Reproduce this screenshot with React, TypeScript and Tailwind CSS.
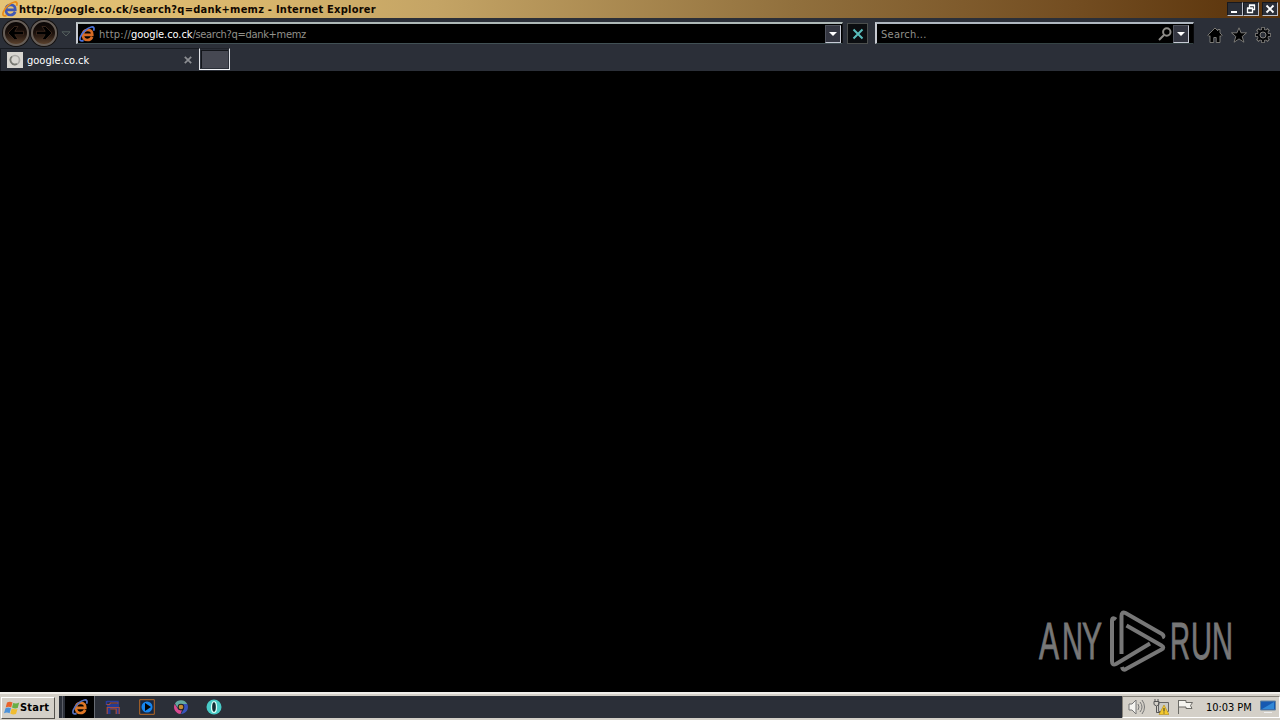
import type { ReactNode } from "react";

const watermarkLetters = [
  { char: "A", x: 4, width: 20 },
  { char: "N", x: 27, width: 21 },
  { char: "Y", x: 47, width: 20 },
  { char: "R", x: 135, width: 20 },
  { char: "U", x: 156, width: 21 },
  { char: "N", x: 177, width: 21 },
];

function IeLogo({ className, ring, letter }: { className: string; ring: string; letter: string }) {
  return (
    <svg viewBox="0 0 16 16" className={className} fill="none">
      <path d="M13.2 10.800C12 13.300 10.500 14 8.500 14 5.500 14 3.800 11.800 3.800 9c0-3 2-5.200 5-5.200 2.900 0 4.700 2 4.500 5H5" stroke={letter} strokeWidth="2.700" />
      <path
        d="M14.600 4.800C15.600 2 14.800.7 12.500 1 8.500 1.600 2.800 6.800 1.300 11c-1.100 3.200.3 4.700 3.300 3.400"
        stroke={ring}
        strokeWidth="1.700"
      />
    </svg>
  );
}

function NavButton({ flip }: { flip?: boolean }) {
  return (
    <div className="flex h-[26px] w-[26px] items-center justify-center rounded-full border-2 border-[#675e57] bg-gradient-to-b from-[#090605] via-[#1c110c] to-[#5a402c] ring-1 ring-[#15110f]">
      <svg viewBox="0 0 18 18" className={flip ? "h-[18px] w-[18px] shrink-0 rotate-180" : "h-[18px] w-[18px] shrink-0"}>
        <path
          d="M1 9 7.500 2.500h3.500L7.800 7.300H16.500v3.400H7.800l3.200 4.800H7.500z"
          fill="#000"
          stroke="#54392a"
          strokeWidth=".6"
        />
      </svg>
    </div>
  );
}

function DropButton() {
  return (
    <div className="flex h-[18px] w-4 shrink-0 items-center justify-center border border-t-[#50535d] border-l-[#50535d] border-r-[#c7cad5] border-b-[#c7cad5] bg-[#343641]">
      <svg viewBox="0 0 8 4" className="h-1 w-2">
        <path d="M0 0h8L4 4z" fill="#fff" />
      </svg>
    </div>
  );
}

function WindowButton({ children }: { children: ReactNode }) {
  return (
    <div className="h-[14px] w-4 border border-t-[#17191f] border-l-[#17191f] border-r-[#bfc1ca] border-b-[#bfc1ca] bg-[#2b2f38]">
      <svg viewBox="0 0 14 12" className="h-3 w-[14px]" fill="none" stroke="#fff">
        {children}
      </svg>
    </div>
  );
}

function TitleBar() {
  return (
    <div className="flex h-[18px] items-center bg-[linear-gradient(90deg,#e5c477_0%,#d8b66c_20%,#c4a465_34%,#91703d_62%,#734d21_84%,#583109_100%)] pl-[2px] pr-[2px]">
      <IeLogo className="h-4 w-4" ring="#e98b18" letter="#4058b4" />
      <span className="ml-px flex-1 whitespace-pre pt-px font-['DejaVu_Sans_Condensed','DejaVu_Sans',sans-serif] text-[11px] leading-[17px] font-bold tracking-[0.245px] text-[#100800]">
        http://google.co.ck/search?q=dank+memz - Internet Explorer
      </span>
      <div className="flex">
        <WindowButton>
          <path d="M3 9h6" strokeWidth="2" />
        </WindowButton>
        <WindowButton>
          <path d="M5.500 5V2.500h5v4H9M5 2h6M3.500 5.500h5v4h-5zM3 5h6" strokeWidth="1.300" />
        </WindowButton>
        <div className="w-[3px]" />
        <WindowButton>
          <path d="m3.500 2.500 7 7m0-7-7 7" strokeWidth="1.900" />
        </WindowButton>
      </div>
    </div>
  );
}

function AddressRow() {
  return (
    <div className="flex h-[30px] items-start pl-[3px] pt-[2px]">
      <div className="flex gap-[2px]">
        <NavButton />
        <NavButton flip />
      </div>
      <svg viewBox="0 0 10 6" className="mt-[11px] ml-1 h-[6px] w-[10px]" fill="none">
        <path d="M1 .8h8L5 5z" stroke="#55605e" />
      </svg>
      <div className="mt-[2px] ml-[5px] flex h-[22px] w-[767px] items-center border-t-2 border-l-2 border-r border-b border-t-[#aeb8b7] border-l-[#c6c9d0] border-r-[#111217] border-b-[#415054] bg-black pr-[1px] pl-[1px]">
        <IeLogo className="h-4 w-4" ring="#4b72da" letter="#d96c25" />
        <span className="ml-1 flex-1 whitespace-nowrap pt-[3px] font-['DejaVu_Sans_Condensed','DejaVu_Sans',sans-serif] text-[11px] text-[#92918b]">
          <span className="tracking-[0.25px]">http://</span>
          <span className="tracking-[-0.08px] text-white">google.co.ck</span>
          <span className="tracking-[-0.3px]">/search?q=dank+memz</span>
        </span>
        <DropButton />
      </div>
      <div className="mt-[3px] ml-[4px] flex h-[21px] w-[21px] items-center justify-center border border-[#4b4e4d] bg-[#0b0d10]">
        <svg viewBox="0 0 12 12" className="h-3 w-3">
          <path d="m1.500 1.500 9 9m0-9-9 9" stroke="#59bdbb" strokeWidth="2" />
        </svg>
      </div>
      <div className="mt-[2px] ml-[7px] flex h-[22px] w-[319px] items-center border-t-2 border-l-2 border-r border-b border-t-[#afb7c0] border-l-[#c6c9d0] border-r-[#08090b] border-b-[#354344] bg-black pr-1 pl-1">
        <span className="flex-1 pt-[3px] font-['DejaVu_Sans_Condensed','DejaVu_Sans',sans-serif] text-[11px] tracking-[0.25px] text-[#92918b]">Search...</span>
        <svg viewBox="0 0 14 14" className="mr-px h-[14px] w-[14px]" fill="none" stroke="#8e8c88" strokeWidth="2">
          <circle cx="8.800" cy="5" r="3.700" />
          <path d="m6 8-5 5" />
        </svg>
        <DropButton />
      </div>
      <div className="mt-[7px] ml-[13px] flex gap-2">
        <svg viewBox="0 0 16 16" className="h-4 w-4">
          <path d="M8 1 .8 8.200l1.300 1.300L3 8.700V15.500h3.800v-5h2.400v5H13V8.700l.9.800 1.300-1.300L13 6V2.500h-2.200v1.300z" fill="#000" stroke="#85837f" strokeWidth=".9" />
        </svg>
        <svg viewBox="0 0 16 16" className="h-4 w-4">
          <path d="m8 .8 2 5h5.500l-4.300 3.700 1.700 5.700L8 11.900l-4.900 3.300 1.700-5.700L.5 5.800H6z" fill="#000" stroke="#85837f" strokeWidth=".9" />
        </svg>
        <svg viewBox="0 0 16 16" className="h-4 w-4" fill="none">
          <path d="M8 0v16M0 8h16M2.300 2.300l11.400 11.400m0-11.400L2.300 13.700" stroke="#85837f" strokeWidth="3.400" />
          <circle cx="8" cy="8" r="5.700" fill="#050608" stroke="#85837f" strokeWidth=".8" />
          <path d="M8 .8v14.400M.8 8h14.400M3 3l10 10m0-10L3 13" stroke="#050608" strokeWidth="1.900" />
          <circle cx="8" cy="8" r="3" fill="#2b2f38" stroke="#85837f" />
        </svg>
      </div>
    </div>
  );
}

function TabRow() {
  return (
    <div className="flex h-[23px] items-stretch">
      <div className="flex w-[199px] items-center border-t border-l border-[#171a20] pl-[6px]">
        <div className="flex h-4 w-4 items-center justify-center bg-[#d8d6d1]">
          <svg viewBox="0 0 12 12" className="h-3 w-3" fill="none">
            <circle cx="6" cy="6" r="4.500" stroke="#aaa9a5" strokeWidth="1.700" />
            <path d="M3 2.500a4.600 4.600 0 0 0 5 7.600" stroke="#777872" strokeWidth="1.600" />
          </svg>
        </div>
        <span className="ml-1 flex-1 pt-[2px] font-['DejaVu_Sans_Condensed','DejaVu_Sans',sans-serif] text-[11px] text-white">google.co.ck</span>
        <svg viewBox="0 0 8 8" className="mr-[7px] h-2 w-2">
          <path d="m.8.8 6.400 6.400m0-6.400L.8 7.200" stroke="#8c8e92" strokeWidth="1.700" />
        </svg>
      </div>
      <div className="h-[22px] w-[31px] border border-t-[#20232a] border-r-[#e1e3e8] border-b-[#f1f2f5] border-l-[#e1e3e8] p-px">
        <div className="h-full border-t border-l border-[#14161b] bg-[#464852]" />
      </div>
    </div>
  );
}

function Watermark() {
  return (
    <svg viewBox="0 0 220 80" className="mr-[25px] mb-[7px] h-20 w-[220px]" fill="none">
      <g fill="#777" stroke="#777" strokeWidth=".9" fontFamily="'Liberation Sans Narrow', 'Liberation Sans', sans-serif" fontSize="52">
        {watermarkLetters.map((letter) => (
          <text key={letter.x} x={letter.x} y="54" textLength={letter.width} lengthAdjust="spacingAndGlyphs">
            {letter.char}
          </text>
        ))}
      </g>
      <path
        d="M81 14.500q-4-3-4 1.500v40q0 5 4 3l34-20.500M86.500 49V11q0-5 4-3l36.500 21q3 2 0 3.500M91.500 20.500l35 20q3.500 2 0 4L91 64q-3 2-4-2"
        stroke="#777"
        strokeWidth="4"
      />
    </svg>
  );
}

function Taskbar() {
  return (
    <div className="flex h-7 border-t-2 border-[#f0eeea] bg-[#d4d0c8] pt-[2px]">
      <div className="mr-1 flex h-[23px] items-center pl-px">
        <div className="flex h-[22px] w-[54px] items-center border border-t-white border-r-[#55524d] border-b-[#55524d] border-l-white bg-[#d4d0c8] pl-[2px]">
          <svg viewBox="0 0 16 16" className="h-4 w-4">
            <path d="M3 2.500q3-1.500 5.500 0L7.200 7.500Q4.500 6 1.700 7.500z" fill="#e9632c" />
            <path d="M9.200 3q3 1 6-.5L13.700 8q-3 1-5.700-.5z" fill="#69ae45" />
            <path d="M1.500 8.200Q4 7 7 8.200l-1.400 5Q3 12 0 13.200z" fill="#4c92da" />
            <path d="M7.700 8.500q3 1.200 5.800.5L12 14q-3 1-5.700-.5z" fill="#f0bd31" />
          </svg>
          <span className="pt-px font-['DejaVu_Sans_Condensed','DejaVu_Sans',sans-serif] text-[11px] font-bold tracking-[0.2px] text-black">Start</span>
        </div>
      </div>
      <div className="flex h-[22px] flex-1 items-center bg-[#2b2f38]">
        <div className="mr-[2px] ml-[3px] h-full w-px bg-[#5b5e66]" />
        <div className="flex h-[22px] w-[30px] items-center justify-center border-r border-[#676b73] bg-black">
          <IeLogo className="h-4 w-4" ring="#5670bd" letter="#de7625" />
        </div>
        <svg viewBox="0 0 16 16" className="ml-[10px] h-4 w-4">
          <path d="M1.500 2v4M2 2.500h11V6" fill="none" stroke="#283c9f" strokeWidth="1.500" />
          <path d="M2 5h12v10h-2.500v-5h-6v5H2z" fill="#253b91" />
          <path d="M1.500 5.500h3l1-1.500h8M2 8.500h12M2.200 8v7m3-5h6v5m3-7v7" fill="none" stroke="#a94c3d" strokeWidth="1.200" />
        </svg>
        <svg viewBox="0 0 16 16" className="ml-[18px] h-4 w-4">
          <path d="M.7.7h14.600v14.600H.7z" fill="#172741" stroke="#b86925" />
          <circle cx="8" cy="8" r="5.500" fill="#1685ef" />
          <path d="m6 4 6 4-6 4z" fill="#030506" />
        </svg>
        <svg viewBox="0 0 16 16" className="ml-[18px] h-4 w-4">
          <path d="M2 4.500a7 7 0 0 1 12.200.5H8a3.400 3.400 0 0 0-3.200 4z" fill="#64aaa3" />
          <path d="M1.700 5 5 10q1.500 2 4 1l-1.500 4A7 7 0 0 1 1.700 5" fill="#d94a91" />
          <path d="M8 5h6.300A7 7 0 0 1 8 15l3-5z" fill="#3855bd" />
          <circle cx="8" cy="8" r="3.300" fill="#20232a" />
          <circle cx="8" cy="8" r="2.300" fill="#c68b32" />
        </svg>
        <svg viewBox="0 0 16 16" className="ml-[17px] h-4 w-4">
          <circle cx="8" cy="8" r="7.500" fill="#48cbc7" />
          <ellipse cx="8" cy="8" rx="2.500" ry="5.400" fill="#142d35" stroke="#d8fff7" strokeWidth="1.300" />
        </svg>
      </div>
      <div className="flex h-[22px] w-[158px] items-center border border-t-[#858179] border-l-[#858179] border-r-white border-b-white pl-[5px]">
        <svg viewBox="0 0 18 16" className="h-4 w-[18px]" fill="none" stroke="#777" strokeWidth="1">
          <path d="M1 5h3l4-4v14l-4-4H1z" fill="#f5f4f0" />
          <path d="M10 5q2 3 0 6M12 3q4 5 0 10M14 1q5 7 0 14" />
        </svg>
        <svg viewBox="0 0 16 16" className="ml-[7px] h-4 w-4" fill="none">
          <path d="M5.500 3.500h10v9h-10z" fill="#c9c9c4" stroke="#666" />
          <path d="M1 2.500h5v3q-2.500 3-5 0zM3.500 7v6.500h4M2 0v3m3-3v3" stroke="#555" />
          <path d="m11 6 5 9.500H6z" fill="#f4c92d" stroke="#b28a12" strokeWidth=".6" />
          <path d="M11 9v3.500m0 1v1" stroke="#333" />
        </svg>
        <svg viewBox="0 0 16 16" className="ml-2 h-4 w-4">
          <path d="M1.500 1v14M2 1.500h7v2h6.500l-2 3 1.500 3H9V8H2" fill="#f5f4ef" stroke="#6c6b66" />
        </svg>
        <span className="ml-[13px] flex-1 whitespace-nowrap pt-[2px] font-['DejaVu_Sans_Condensed','DejaVu_Sans',sans-serif] text-[11px] tracking-[-0.05px] text-black">10:03 PM</span>
        <svg viewBox="0 0 16 14" className="mr-[3px] h-[14px] w-4">
          <path d="M.5 1h15v9H.5z" fill="#1759b1" stroke="#68859e" />
          <path d="m2 9 12-7v7z" fill="#3288d6" />
          <path d="M4 12h8v1H4z" fill="#eee" />
        </svg>
      </div>
    </div>
  );
}

export default function App() {
  return (
    <div className="flex h-screen w-screen flex-col overflow-hidden bg-black">
      <TitleBar />
      <div className="h-[53px] bg-[#2b2f38]">
        <AddressRow />
        <TabRow />
      </div>
      <main className="flex flex-1 items-end justify-end bg-black">
        <Watermark />
      </main>
      <Taskbar />
    </div>
  );
}
